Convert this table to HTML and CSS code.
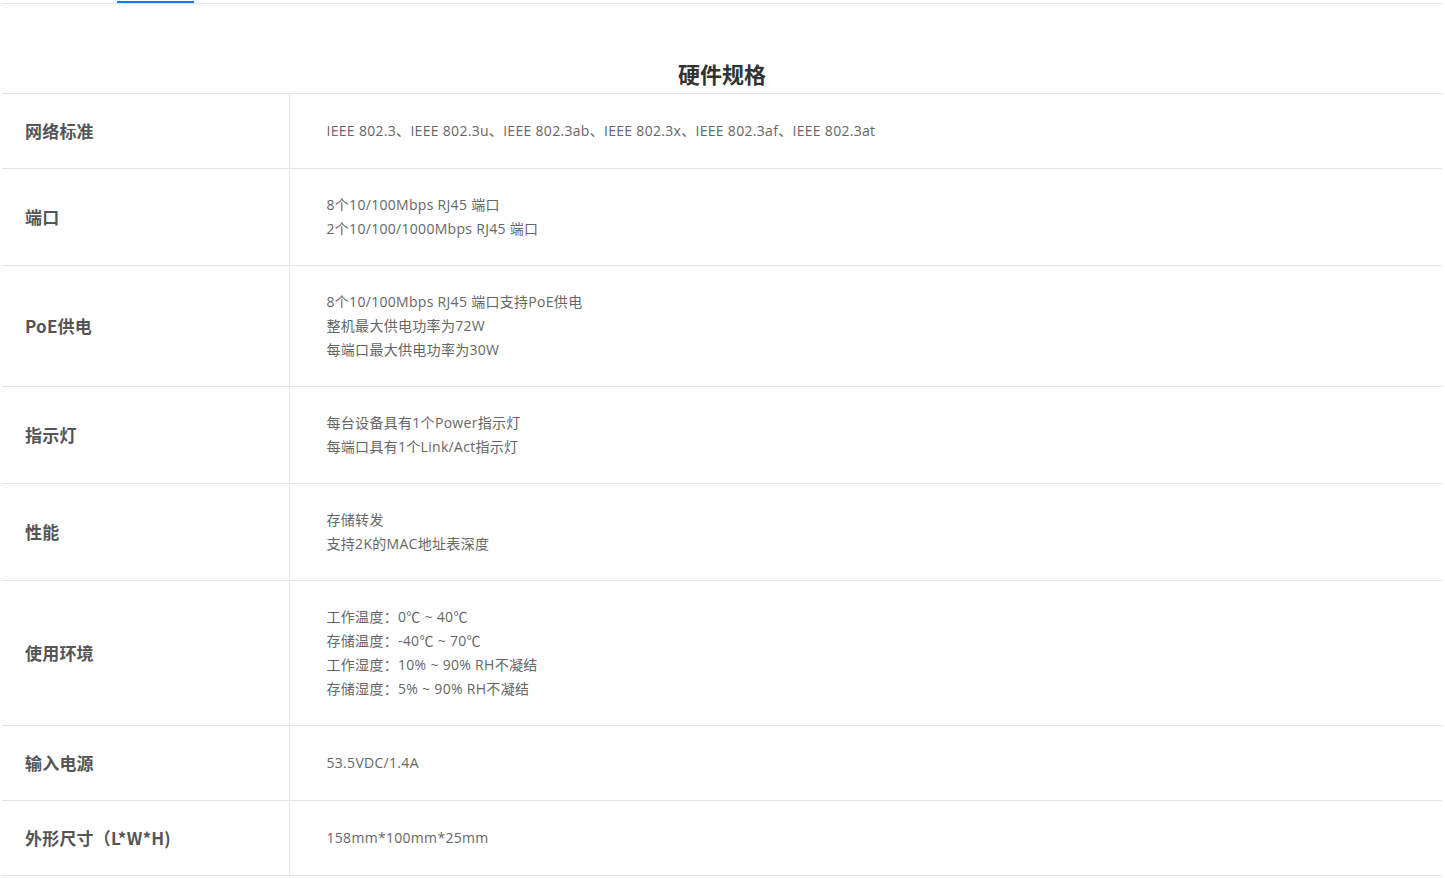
FILE: index.html
```html
<!DOCTYPE html>
<html lang="zh-CN">
<head>
  <meta charset="UTF-8">
  <title>硬件规格</title>
  <link rel="stylesheet" href="styles.css">
</head>
<body>

  <div class="page">
    <div class="tabs">
      <span class="tab-active"></span>
    </div>

    <h2 class="spec-title">硬件规格</h2>

    <table class="spec-table">
      <tr>
        <th>网络标准</th>
        <td>IEEE 802.3、IEEE 802.3u、IEEE 802.3ab、IEEE 802.3x、IEEE 802.3af、IEEE 802.3at</td>
      </tr>
      <tr>
        <th>端口</th>
        <td>8个10/100Mbps RJ45 端口<br>2个10/100/1000Mbps RJ45 端口</td>
      </tr>
      <tr>
        <th>PoE供电</th>
        <td>8个10/100Mbps RJ45 端口支持PoE供电<br>整机最大供电功率为72W<br>每端口最大供电功率为30W</td>
      </tr>
      <tr>
        <th>指示灯</th>
        <td>每台设备具有1个Power指示灯<br>每端口具有1个Link/Act指示灯</td>
      </tr>
      <tr>
        <th>性能</th>
        <td>存储转发<br>支持2K的MAC地址表深度</td>
      </tr>
      <tr>
        <th>使用环境</th>
        <td>工作温度：0℃ ~ 40℃<br>存储温度：-40℃ ~ 70℃<br>工作湿度：10% ~ 90% RH不凝结<br>存储湿度：5% ~ 90% RH不凝结</td>
      </tr>
      <tr>
        <th>输入电源</th>
        <td>53.5VDC/1.4A</td>
      </tr>
      <tr>
        <th>外形尺寸（L*W*H)</th>
        <td>158mm*100mm*25mm</td>
      </tr>
    </table>
  </div>

</body>
</html>
```

FILE: styles.css
```css
* {
  box-sizing: border-box;
}

body {
  margin: 0;
  padding: 0;
  background: #fff;
  font-family: "Open Sans", "Noto Sans CJK SC", sans-serif;
  color: #666;
}

.page {
  width: 1440px;
  margin: 0 0 0 2px;
}

.tabs {
  height: 4px;
  padding-top: 1px;
  border-bottom: 1px solid #e4e4e4;
}

.tab-active {
  display: block;
  width: 77px;
  height: 2px;
  margin-left: 115px;
  background-color: #0b7bf6;
}

.spec-title {
  margin: 0;
  padding: 54px 0 5px;
  font-size: 22px;
  line-height: 30px;
  font-weight: bold;
  text-align: center;
  color: #333;
  font-family: "Noto Sans CJK SC", sans-serif;
}

.spec-table {
  width: 100%;
  border-collapse: collapse;
  border-top: 1px solid #e4e4e4;
}

.spec-table tr {
  border-bottom: 1px solid #e4e4e4;
}

.spec-table th {
  width: 287px;
  padding: 24px 0 24px 23px;
  border-right: 1px solid #e4e4e4;
  text-align: left;
  vertical-align: middle;
  font-size: 17px;
  line-height: 26px;
  font-weight: bold;
  color: #555;
  letter-spacing: 0.2px;
  font-family: "Noto Sans CJK SC", sans-serif;
}

.spec-table td {
  padding: 24px 0 24px 37px;
  font-size: 14px;
  line-height: 24px;
  letter-spacing: 0.3px;
  color: #666;
  vertical-align: middle;
}
```
